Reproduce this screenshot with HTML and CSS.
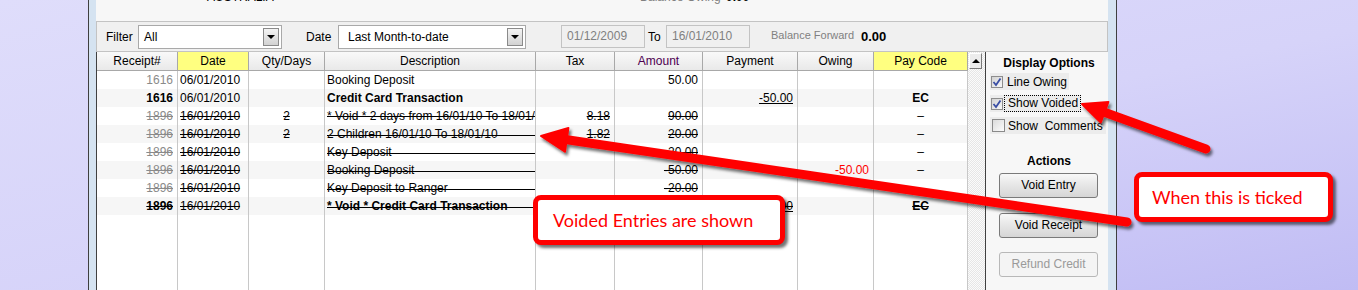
FILE: index.html
```html
<!DOCTYPE html>
<html lang="en">
<head>
    <meta charset="UTF-8">
    <title>Receipts - Show Voided</title>
    <link rel="stylesheet" href="styles.css">
</head>
<body>
    <div class="screen">
        <div class="desk"></div>
        <div class="frame">
            <div class="window">
                <div class="topline">
                    <div class="topline-text">
                        <span class="country">AUSTRALIA</span>
                        <span class="owing-label">Balance Owing</span>
                        <span class="owing-value">0.00</span>
                    </div>
                </div>

                <div class="filterbar">
                    <span class="lbl lbl-filter">Filter</span>
                    <div class="combo combo-filter"><span class="combo-text">All</span><span class="drop"></span></div>
                    <span class="lbl lbl-date">Date</span>
                    <div class="combo combo-date"><span class="combo-text">Last Month-to-date</span><span class="drop"></span></div>
                    <div class="datebox datebox-from">01/12/2009</div>
                    <span class="lbl lbl-to">To</span>
                    <div class="datebox">16/01/2010</div>
                    <span class="balance-label">Balance Forward</span>
                    <span class="balance-value">0.00</span>
                </div>

                <div class="main">
                    <div class="grid">
                        <div class="row head">
                            <span>Receipt#</span>
                            <span class="hl">Date</span>
                            <span>Qty/Days</span>
                            <span>Description</span>
                            <span>Tax</span>
                            <span class="purple">Amount</span>
                            <span>Payment</span>
                            <span>Owing</span>
                            <span class="hl">Pay Code</span>
                        </div>
                        <div class="row">
                            <span class="r gray">1616</span>
                            <span>06/01/2010</span>
                            <span></span>
                            <span class="desc">Booking Deposit</span>
                            <span></span>
                            <span class="r">50.00</span>
                            <span></span>
                            <span></span>
                            <span></span>
                        </div>
                        <div class="row alt">
                            <span class="r b">1616</span>
                            <span>06/01/2010</span>
                            <span></span>
                            <span class="desc b">Credit Card Transaction</span>
                            <span></span>
                            <span></span>
                            <span class="r pay"><u>-50.00</u></span>
                            <span></span>
                            <span class="c b">EC</span>
                        </div>
                        <div class="row">
                            <span class="r gray s">1896</span>
                            <span class="s">16/01/2010</span>
                            <span class="c s">2</span>
                            <span class="desc s">* Void * 2 days from 16/01/10 To 18/01/10</span>
                            <span class="r s">8.18</span>
                            <span class="r s">90.00</span>
                            <span></span>
                            <span></span>
                            <span class="c">&ndash;</span>
                        </div>
                        <div class="row alt">
                            <span class="r gray s">1896</span>
                            <span class="s">16/01/2010</span>
                            <span class="c s">2</span>
                            <span class="desc sfull">2 Children 16/01/10 To 18/01/10</span>
                            <span class="r s">1.82</span>
                            <span class="r s">20.00</span>
                            <span></span>
                            <span></span>
                            <span class="c">&ndash;</span>
                        </div>
                        <div class="row">
                            <span class="r gray s">1896</span>
                            <span class="s">16/01/2010</span>
                            <span></span>
                            <span class="desc sfull">Key Deposit</span>
                            <span></span>
                            <span class="r s">20.00</span>
                            <span></span>
                            <span></span>
                            <span class="c">&ndash;</span>
                        </div>
                        <div class="row alt">
                            <span class="r gray s">1896</span>
                            <span class="s">16/01/2010</span>
                            <span></span>
                            <span class="desc sfull">Booking Deposit</span>
                            <span></span>
                            <span class="r s">-50.00</span>
                            <span></span>
                            <span class="r red">-50.00</span>
                            <span class="c">&ndash;</span>
                        </div>
                        <div class="row">
                            <span class="r gray s">1896</span>
                            <span class="s">16/01/2010</span>
                            <span></span>
                            <span class="desc sfull">Key Deposit to Ranger</span>
                            <span></span>
                            <span class="r s">-20.00</span>
                            <span></span>
                            <span></span>
                            <span class="c">&ndash;</span>
                        </div>
                        <div class="row alt">
                            <span class="r b s">1896</span>
                            <span class="s">16/01/2010</span>
                            <span></span>
                            <span class="desc b sfull">* Void * Credit Card Transaction</span>
                            <span></span>
                            <span></span>
                            <span class="r pay s"><u>-50.00</u></span>
                            <span></span>
                            <span class="c b s">EC</span>
                        </div>
                        <div class="row filler">
                            <span></span><span></span><span></span><span></span><span></span>
                            <span></span><span></span><span></span><span></span>
                        </div>
                    </div>

                    <div class="scroll"><div class="scroll-up"></div></div>

                    <div class="options">
                        <div class="opt-title">Display Options</div>
                        <div class="opt opt-owing">
                            <span class="box"><svg width="10" height="10" viewBox="0 0 10 10"><path d="M1.5 5 L4 8 L8.5 1.5" fill="none" stroke="#3a4ea4" stroke-width="1.8"/></svg></span>
                            <span class="opt-text">Line Owing</span>
                        </div>
                        <div class="opt opt-voided">
                            <span class="box"><svg width="10" height="10" viewBox="0 0 10 10"><path d="M1.5 5 L4 8 L8.5 1.5" fill="none" stroke="#3a4ea4" stroke-width="1.8"/></svg></span>
                            <span class="opt-text focus">Show Voided</span>
                        </div>
                        <div class="opt opt-comments">
                            <span class="box box-off"></span>
                            <span class="opt-text">Show&nbsp; Comments</span>
                        </div>
                        <div class="opt-title actions-title">Actions</div>
                        <div class="btn btn-first">Void Entry</div>
                        <div class="btn">Void Receipt</div>
                        <div class="btn btn-off">Refund Credit</div>
                    </div>
                </div>
            </div>
        </div>
    </div>

    <svg class="marks" width="1358" height="290" viewBox="0 0 1358 290">
        <defs>
            <filter id="shade" x="-20%" y="-60%" width="140%" height="220%">
                <feDropShadow dx="2" dy="3" stdDeviation="1.5" flood-color="#000" flood-opacity="0.55"/>
            </filter>
        </defs>
        <g filter="url(#shade)" fill="#ff0000" stroke="#ff0000" stroke-linejoin="round">
            <line x1="562" y1="139" x2="1127" y2="222" stroke-width="9" stroke-linecap="round"/>
            <polygon points="541,136 568.4,127.9 565,151.7" stroke-width="2"/>
            <line x1="1101" y1="111" x2="1206" y2="149" stroke-width="9" stroke-linecap="round"/>
            <polygon points="1082,104 1108.4,101.9 1100.8,122.5" stroke-width="2"/>
        </g>
    </svg>
    <div class="callout callout-voided">Voided Entries are shown</div>
    <div class="callout callout-ticked">When this is ticked</div>
</body>
</html>
```

FILE: styles.css
```css
* {
    box-sizing: border-box;
}
html, body {
    margin: 0;
}
body {
    position: relative;
    width: 1358px;
    height: 290px;
    overflow: hidden;
    font-family: "Liberation Sans", Arial, sans-serif;
    font-size: 12px;
    color: #000;
    background: linear-gradient(to bottom right, #dfddfb 0%, #d6d3f9 55%, #c0bcf4 100%);
}
.screen {
    display: flex;
    height: 290px;
}
.desk {
    flex: none;
    width: 88px;
}
.frame {
    flex: none;
    width: 1029px;
    padding: 0 8px 0 7px;
    border-left: 1px solid #3f3f3f;
    border-right: 1px solid #3f3f3f;
    background: #d5e3f1;
}
.window {
    display: flex;
    flex-direction: column;
    height: 100%;
    background: #f7f7f7;
}

/* top strip, mostly scrolled away */
.topline {
    flex: none;
    height: 21px;
    overflow: hidden;
}
.topline-text {
    display: flex;
    margin-top: -10px;
    line-height: 14px;
    white-space: nowrap;
}
.country {
    width: 433px;
    margin-left: 111px;
}
.owing-label {
    width: 86px;
    color: #808080;
}
.owing-value {
    font-weight: bold;
}

/* filter bar */
.filterbar {
    flex: none;
    display: flex;
    align-items: center;
    height: 31px;
    padding-left: 9px;
    border: 1px solid #c3c3c3;
    background: #f0f0f0;
    white-space: nowrap;
}
.lbl {
    flex: none;
}
.lbl-filter {
    width: 32px;
}
.lbl-date {
    width: 32px;
    margin-left: 24px;
}
.lbl-to {
    width: 18px;
    margin-left: 3px;
}
.combo {
    flex: none;
    display: flex;
    align-items: center;
    justify-content: space-between;
    height: 24px;
    padding: 0 2px 0 4px;
    border: 1px solid #a9a9a9;
    background: #fff;
}
.combo-filter {
    width: 144px;
}
.combo-date {
    width: 188px;
}
.combo-text {
    padding-left: 1px;
}
.combo-date .combo-text {
    padding-left: 5px;
}
.drop {
    position: relative;
    width: 16px;
    height: 18px;
    border: 1px solid #8a8a8a;
    background: linear-gradient(#f4f4f4, #d2d2d2);
}
.drop::after {
    content: "";
    position: absolute;
    left: 3px;
    top: 6px;
    border-left: 4px solid transparent;
    border-right: 4px solid transparent;
    border-top: 4px solid #000;
}
.datebox {
    flex: none;
    width: 84px;
    height: 23px;
    padding-left: 5px;
    line-height: 21px;
    border: 1px solid #c3c3c3;
    background: #f0f0f0;
    color: #808080;
}
.datebox-from {
    margin-left: 35px;
}
.balance-label {
    flex: none;
    width: 90px;
    margin-left: 21px;
    margin-top: -4px;
    font-size: 11px;
    color: #808080;
}
.balance-value {
    font-size: 13px;
    font-weight: bold;
}

/* receipts grid */
.main {
    flex: 1;
    display: flex;
    min-height: 0;
}
.grid {
    flex: none;
    display: flex;
    flex-direction: column;
    width: 872px;
    border-left: 1px solid #404040;
    background: #fff;
}
.row {
    flex: none;
    display: grid;
    grid-template-columns: 81px 71px 76px 211px 79px 88px 95px 76px 94px;
    height: 18px;
    line-height: 18px;
}
.row > span {
    padding: 0 2px;
    border-right: 1px solid #c8c8c8;
    white-space: nowrap;
    overflow: hidden;
}
.row.head {
    height: 19px;
    border-bottom: 1px solid #a8a8a8;
    background: linear-gradient(#f9f9f9, #e9e9e9);
}
.row.head > span {
    text-align: center;
    border-right-color: #a8a8a8;
}
.row.head > span.hl {
    background: #ffff80;
}
.purple {
    color: #4e0050;
}
.row.alt {
    background: #f6f6f6;
}
.row.filler {
    flex: 1;
    height: auto;
}
.r {
    text-align: right;
}
.row > span.r {
    padding-right: 4px;
}
.c {
    text-align: center;
}
.b {
    font-weight: bold;
}
.gray {
    color: #8a8a8a;
}
.red {
    color: #ff0000;
}
.s {
    text-decoration: line-through;
}
.row > span.desc {
    padding-right: 0;
}
.sfull {
    background: linear-gradient(#000, #000) no-repeat 0 10px / 100% 1px;
    background-origin: content-box;
    background-clip: content-box;
}
.pay u {
    text-decoration: underline;
}
.pay.s u {
    text-decoration: underline line-through;
}

/* scrollbar */
.scroll {
    flex: none;
    width: 17px;
    padding-left: 1px;
    background: repeating-conic-gradient(#e6e6e6 0 25%, #fbfbfb 0 50%) 0 0 / 2px 2px;
}
.scroll-up {
    position: relative;
    width: 13px;
    height: 16px;
    margin-top: 1px;
    border: 1px solid;
    border-color: #fff #7a7a7a #7a7a7a #fff;
    background: #ececec;
}
.scroll-up::after {
    content: "";
    position: absolute;
    left: 2px;
    top: 5px;
    border-left: 4px solid transparent;
    border-right: 4px solid transparent;
    border-bottom: 4px solid #000;
}

/* display options */
.options {
    flex: 1;
    padding: 3px 0 0 4px;
    border-left: 1px solid #404040;
    background: #f7f7f7;
}
.opt-title {
    font-weight: bold;
    line-height: 16px;
    text-align: center;
}
.opt {
    display: flex;
    align-items: center;
    width: fit-content;
    height: 17px;
    margin-top: 5px;
    background: #ececec;
}
.opt-owing {
    margin-top: 2px;
    padding-right: 2px;
}
.box {
    display: flex;
    align-items: center;
    justify-content: center;
    width: 12px;
    height: 12px;
    margin-left: 1px;
    border: 1px solid #8d8d8d;
    background: linear-gradient(135deg, #d2d2d2, #f8f8f8);
}
.box-off {
    width: 13px;
    height: 13px;
    margin-left: 2px;
    border-color: #8a8a8a;
    background: linear-gradient(135deg, #dadada, #fcfcfc);
}
.opt-text {
    margin-left: 4px;
    white-space: nowrap;
}
.opt-voided .opt-text {
    margin-left: 1px;
    padding: 0 2px 0 3px;
    line-height: 15px;
    border: 1px dotted #000;
}
.opt-comments .opt-text {
    margin-left: 3px;
    padding-right: 3px;
}
.actions-title {
    margin-top: 19px;
}
.btn {
    width: 99px;
    height: 25px;
    margin: 15px 0 0 9px;
    line-height: 23px;
    text-align: center;
    border: 1px solid #7a7a7a;
    border-radius: 3px;
    background: linear-gradient(#f8f8f8, #e6e6e6 50%, #d6d6d6);
}
.btn-first {
    margin-top: 4px;
}
.btn-off {
    margin-top: 14px;
    border-color: #b8b8b8;
    background: #f4f4f4;
    color: #9a9a9a;
}

/* annotation layer */
.marks {
    position: absolute;
    left: 0;
    top: 0;
    pointer-events: none;
}
.callout {
    position: absolute;
    display: flex;
    align-items: center;
    height: 50px;
    border: 5px solid #ff0000;
    border-radius: 8px;
    background: #fff;
    color: #ff0000;
    font-family: Lato, "Open Sans", sans-serif;
    font-size: 18px;
    white-space: nowrap;
    box-shadow: 3px 3px 3px rgba(0, 0, 0, 0.55);
}
.callout-voided {
    left: 533px;
    top: 195px;
    width: 252px;
    padding-left: 15px;
}
.callout-ticked {
    left: 1134px;
    top: 172px;
    width: 199px;
    padding-left: 13px;
}
```
